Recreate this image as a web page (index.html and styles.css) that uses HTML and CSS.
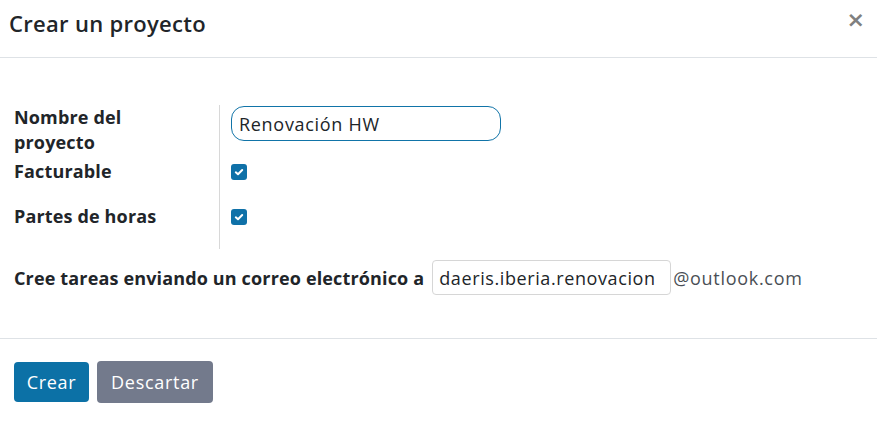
FILE: index.html
```html
<!DOCTYPE html>
<html lang="es">
<head>
<meta charset="utf-8">
<link rel="stylesheet" href="styles.css">
</head>
<body>
<div class="modal">
  <header class="modal-header">
    <h4 class="modal-title">Crear un proyecto</h4>
    <button class="close" aria-label="Cerrar">×</button>
  </header>
  <main class="modal-body">
    <div class="group">
      <div class="labels">
        <div class="lbl lbl-name">Nombre del proyecto</div>
        <div class="lbl lbl-check">Facturable</div>
        <div class="lbl lbl-check">Partes de horas</div>
      </div>
      <div class="fields">
        <div class="field-name"><input class="name-input" type="text" value="Renovación HW"></div>
        <div class="field-check"><span class="check"><svg viewBox="0 0 16 16" width="16" height="16"><path d="M4.8 8.3 L7 10.3 L11.2 6" fill="none" stroke="#fff" stroke-width="2" stroke-linecap="round" stroke-linejoin="round"/></svg></span></div>
        <div class="field-check"><span class="check"><svg viewBox="0 0 16 16" width="16" height="16"><path d="M4.8 8.3 L7 10.3 L11.2 6" fill="none" stroke="#fff" stroke-width="2" stroke-linecap="round" stroke-linejoin="round"/></svg></span></div>
      </div>
    </div>
    <div class="email-row">
      <span class="email-label">Cree tareas enviando un correo electrónico a</span>
      <input class="email-input" type="text" value="daeris.iberia.renovacion">
      <span class="domain">@outlook.com</span>
    </div>
  </main>
  <footer class="modal-footer">
    <button class="btn btn-primary">Crear</button>
    <button class="btn btn-secondary">Descartar</button>
  </footer>
</div>
</body>
</html>
```

FILE: styles.css
```css
* { box-sizing: border-box; }
html, body { margin: 0; padding: 0; background: #fff; }
body {
  font-family: "Open Sans", "Noto Sans", sans-serif;
  color: #212529;
  font-size: 18px;
  letter-spacing: 0.7px;
}
.modal { width: 877px; height: 423px; display: flex; flex-direction: column; }
.modal-header {
  height: 58px;
  border-bottom: 1px solid #dee2e6;
  display: flex;
  align-items: center;
  justify-content: space-between;
  padding: 0 12px 0 9px;
}
.modal-title {
  margin: 0;
  font-size: 22px;
  font-weight: 600;
  letter-spacing: 0.3px;
  color: #212529;
  position: relative;
  top: -6px;
}
.close {
  border: 0;
  background: none;
  padding: 0;
  font-size: 22px;
  font-weight: 700;
  color: #808080;
  line-height: 1;
  position: relative;
  top: -9px;
  font-family: "DejaVu Sans", sans-serif;
}
.modal-body {
  padding: 47px 14px 0 14px;
  height: 281px;
  border-bottom: 1px solid #dee2e6;
}
.group { display: flex; }
.labels {
  width: 206px;
  height: 144px;
  border-right: 1px solid #d8d8d8;
  font-weight: 700;
  letter-spacing: 0.15px;
}
.lbl { line-height: 25px; }
.lbl-name { width: 140px; height: 54px; padding-top: 0; }
.lbl-check { height: 45px; }
.fields { padding-left: 11px; display: flex; flex-direction: column; }
.field-name { height: 54px; padding-top: 1px; }
.name-input {
  width: 270px;
  height: 35px;
  border: 1px solid #1174a8;
  border-radius: 13px;
  padding: 0 7px;
  font: inherit;
  letter-spacing: 0.7px;
  color: #212529;
  outline: none;
}
.field-check { height: 45px; padding-top: 2px; }
.check {
  display: inline-block;
  width: 16px; height: 16px;
  border-radius: 3px;
  background: #0f71a8;
}
.check svg { display: block; }
.email-row {
  display: flex;
  align-items: center;
  margin-top: 11px;
}
.email-label { font-weight: 700; letter-spacing: 0.15px; margin-right: 8px; }
.email-input {
  width: 239px;
  height: 35px;
  border: 1px solid #d6d6d6;
  border-radius: 4px;
  padding: 0 6px;
  font: inherit;
  letter-spacing: 0.6px;
  color: #212529;
  outline: none;
}
.domain { color: #4a4f55; margin-left: 2px; }
.modal-footer {
  display: flex;
  align-items: flex-start;
  gap: 8px;
  padding: 22px 14px 0 14px;
  height: 84px;
}
.btn {
  border: 0;
  font: inherit;
  letter-spacing: 0.7px;
  color: #fff;
  border-radius: 4px;
  padding: 0;
  cursor: pointer;
}
.btn-primary { background: #0c71a6; width: 75px; height: 40px; margin-top: 1px; }
.btn-secondary { background: #737a8c; width: 116px; height: 42px; }
```
